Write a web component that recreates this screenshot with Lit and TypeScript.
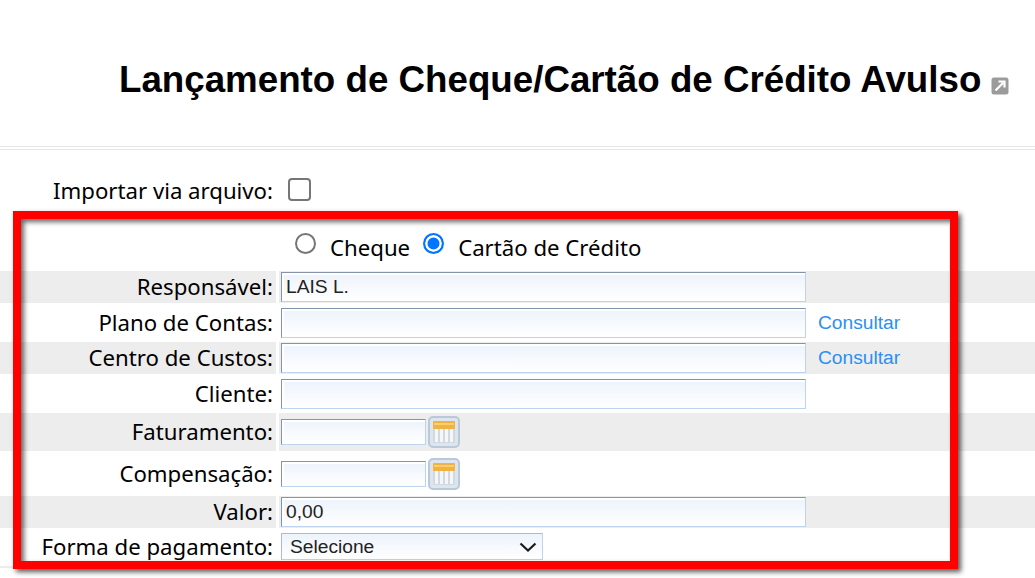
import { LitElement, html, css } from "lit";
import { customElement } from "lit/decorators.js";

const calendar = html`<svg class="cal" width="32" height="32" viewBox="0 0 32 32">
  <rect x="1" y="1" width="30" height="30" rx="4" fill="#dde5ee" stroke="#b9c9da" stroke-width="2"/>
  <rect x="5" y="5" width="22" height="22" fill="#d3d9e0"/>
  <rect x="5" y="5" width="22" height="8" rx="1" fill="#f2b240"/>
  <rect x="6" y="7" width="20" height="2" fill="#f8cf78"/>
  <path d="M8.500 13v13M13.500 13v13M18.500 13v13M23.500 13v13" stroke="#f4f6f8" stroke-width="3"/>
</svg>`;

@customElement("app-root")
export class AppRoot extends LitElement {
  static styles = css`
    :host { display: block; width: 1035px; height: 578px; overflow: hidden; position: relative; background: #fff; color: #000; font-family: "Noto Sans", sans-serif; font-size: 22.200px; }
    .head { height: 147px; box-sizing: border-box; border-bottom: 1px solid #e6e6e6; display: flex; align-items: flex-start; padding: 58px 0 0 119px; gap: 10px; }
    .line2 { height: 2px; border-bottom: 1px solid #e6e6e6; }
    h1 { margin: 0; font: bold 36.730px/44px "Liberation Sans", Arial, sans-serif; white-space: nowrap; }
    .ext { margin-top: 19px; }
    .import { height: 78px; box-sizing: border-box; padding-top: 28px; display: grid; grid-template-columns: 273px auto; column-gap: 15px; align-items: start; }
    .lab { text-align: right; line-height: 26px; white-space: nowrap; }
    .check { appearance: none; box-sizing: border-box; width: 23px; height: 23px; margin: 0; border: 2px solid #767676; border-radius: 4px; background: #fff; }
    .types { height: 43px; box-sizing: border-box; padding-left: 295px; display: flex; align-items: flex-start; }
    .types input { appearance: none; box-sizing: border-box; width: 21px; height: 21px; margin: 5px 0 0 0; border: 2px solid #767676; border-radius: 50%; background: #fff; }
    .types input:checked { border-color: #0075ff; background: #0075ff; box-shadow: inset 0 0 0 2.500px #fff; }
    .types label { line-height: 26px; margin: 7px 13px 0 14px; white-space: nowrap; }
    .rows { display: flex; flex-direction: column; gap: 3px; }
    .row { display: grid; grid-template-columns: 276px 1fr; column-gap: 3px; }
    .row > div { display: flex; align-items: center; }
    .row.band > div { background: #ededed; }
    .row .l { justify-content: flex-end; padding: 0 3px 0 0; line-height: 26px; white-space: nowrap; }
    .row .v { padding-left: 2px; gap: 12px; }
    .row .v.tool { gap: 2px; }
    input.tx { box-sizing: border-box; width: 525px; height: 30px; padding: 0 0 0 4px; font: 19.200px "Liberation Sans", Arial, sans-serif; color: #222; border: 1px solid; border-color: #8494ad #bdd3f0 #bdd3f0 #8494ad; background: linear-gradient(#edf3fc, #fff); box-shadow: inset 2px 2px 0 #fff; outline: none; }
    input.tx.short { width: 145px; height: 26px; }
    a { color: #2b8ff5; font: 19.200px "Liberation Sans", Arial, sans-serif; text-decoration: none; }
    .sel { position: relative; display: block; width: 262px; height: 27px; }
    select { appearance: none; display: block; box-sizing: border-box; width: 262px; height: 27px; padding: 0 0 0 8px; font: 19.200px "Liberation Sans", Arial, sans-serif; color: #222; border: 1px solid; border-color: #a8bcd8 #bdd3f0 #bdd3f0 #a8bcd8; background: linear-gradient(#edf3fc, #fff); border-radius: 0; }
    .chev { position: absolute; right: 6px; top: 9px; pointer-events: none; }
    .bottom { position: absolute; left: 0; width: 950px; top: 566px; height: 2px; background: #ececec; }
    .mark { position: absolute; left: 13px; top: 211px; width: 945px; height: 358px; box-sizing: border-box; border: 8px solid #ff0000; box-shadow: 3px 3px 5px rgba(0,0,0,.65), inset 3px 3px 5px rgba(0,0,0,.6); pointer-events: none; }
  `;

  private row(label: string, cls: string, h: number, value: unknown) {
    return html`<div class="row ${cls}" style="height:${h}px">
      <div class="l">${label}</div>
      <div class="v ${cls.includes("tool") ? "tool" : ""}">${value}</div>
    </div>`;
  }

  render() {
    const cons = html`<a href="#">Consultar</a>`;
    return html`
      <div class="head">
        <h1>Lançamento de Cheque/Cartão de Crédito Avulso</h1>
        <svg class="ext" width="18" height="18" viewBox="0 0 18 18">
          <rect x="0.500" y="0.500" width="17" height="17" rx="2.500" fill="#9b9b9b"/>
          <path d="M4.500 13.500 12 6M7.500 4.500h6v6" fill="none" stroke="#fff" stroke-width="2.200"/>
        </svg>
      </div>
      <div class="line2"></div>
      <div class="import">
        <div class="lab">Importar via arquivo:</div>
        <input class="check" type="checkbox" />
      </div>
      <div class="types">
        <input type="radio" name="t" /><label>Cheque</label>
        <input type="radio" name="t" checked /><label>Cartão de Crédito</label>
      </div>
      <div class="rows">
        ${this.row("Responsável:", "band", 32, html`<input class="tx" value="LAIS L." />`)}
        ${this.row("Plano de Contas:", "", 33, html`<input class="tx" />${cons}`)}
        ${this.row("Centro de Custos:", "band", 32, html`<input class="tx" />${cons}`)}
        ${this.row("Cliente:", "", 33, html`<input class="tx" />`)}
        ${this.row("Faturamento:", "band tool", 38, html`<input class="tx short" />${calendar}`)}
        ${this.row("Compensação:", "tool", 39, html`<input class="tx short" />${calendar}`)}
        ${this.row("Valor:", "band", 32, html`<input class="tx" value="0,00" />`)}
        ${this.row("Forma de pagamento:", "", 31, html`<span class="sel"><select><option>Selecione</option></select>
          <svg class="chev" width="18" height="10" viewBox="0 0 18 10"><path d="M1.500 1.500 9 8.500l7.500-7" fill="none" stroke="#1a1a1a" stroke-width="2.200"/></svg></span>`)}
      </div>
      <div class="bottom"></div>
      <div class="mark"></div>
    `;
  }
}
